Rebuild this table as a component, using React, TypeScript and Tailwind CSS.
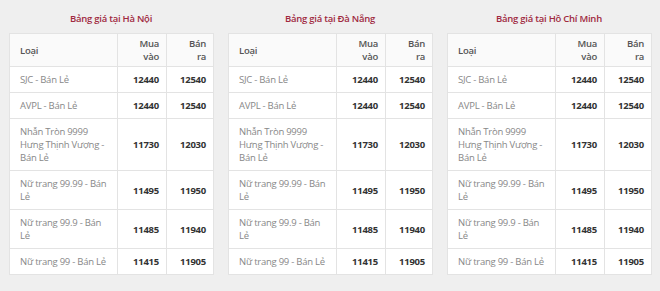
const ROWS = [
  { name: "SJC - Bán Lẻ", buy: "12440", sell: "12540" },
  { name: "AVPL - Bán Lẻ", buy: "12440", sell: "12540" },
  { name: "Nhẫn Tròn 9999 Hưng Thịnh Vượng - Bán Lẻ", buy: "11730", sell: "12030" },
  { name: "Nữ trang 99.99 - Bán Lẻ", buy: "11495", sell: "11950" },
  { name: "Nữ trang 99.9 - Bán Lẻ", buy: "11485", sell: "11940" },
  { name: "Nữ trang 99 - Bán Lẻ", buy: "11415", sell: "11905" },
];

const CITIES = ["Hà Nội", "Đà Nẵng", "Hồ Chí Minh"];

function PriceTable({ city }: { city: string }) {
  return (
    <div className="w-[204px] shrink-0">
      <h3 className="mb-[7px] text-center text-[9.5px] font-semibold leading-[14px] tracking-[-0.25px] text-[#a02a3f]">
        Bảng giá tại {city}
      </h3>
      <table className="w-full table-fixed border-collapse bg-white text-[9.5px] tracking-[-0.25px]">
        <colgroup>
          <col className="w-[108px]" />
          <col className="w-[49px]" />
          <col className="w-[47px]" />
        </colgroup>
        <thead>
          <tr className="bg-[#fafafa] text-[#555] font-semibold leading-[13px]">
            <th className="border border-[#e3e3e3] py-[3px] pl-[10px] pr-2 text-left font-semibold">Loại</th>
            <th className="border border-[#e3e3e3] py-[3px] pl-2 pr-[7px] text-right font-semibold">Mua vào</th>
            <th className="border border-[#e3e3e3] py-[3px] pl-[18px] pr-[7px] text-right font-semibold">Bán ra</th>
          </tr>
        </thead>
        <tbody className="leading-[13px]">
          {ROWS.map(r => (
            <tr key={r.name}>
              <td className="border border-[#e3e3e3] py-[6px] pl-[10px] pr-[8px] text-[#888]">{r.name}</td>
              <td className="border border-[#e3e3e3] py-[6px] pr-[7px] text-right font-bold text-[#333]">{r.buy}</td>
              <td className="border border-[#e3e3e3] py-[6px] pr-[7px] text-right font-bold text-[#333]">{r.sell}</td>
            </tr>
          ))}
        </tbody>
      </table>
    </div>
  );
}

export default function App() {
  return (
    <main className="min-h-[291px] bg-[#efefef] pt-[12px] pl-[9px] font-['Open_Sans',sans-serif]">
      <div className="flex gap-[15px]">
        {CITIES.map(c => (
          <PriceTable key={c} city={c} />
        ))}
      </div>
    </main>
  );
}
